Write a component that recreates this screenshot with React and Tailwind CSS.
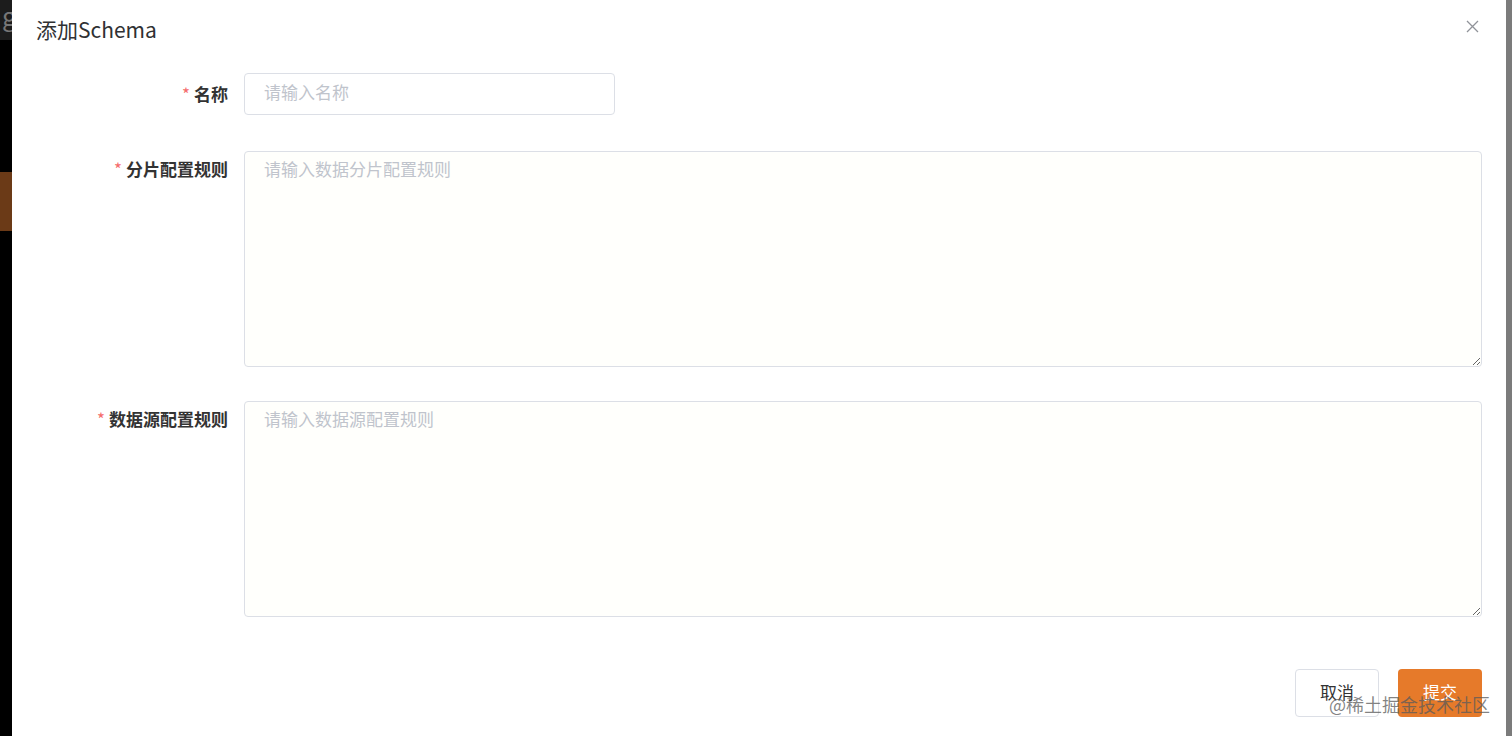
import { useState } from "react";

const font = { fontFamily: '"Noto Sans CJK SC", "Noto Sans", "Liberation Sans", sans-serif' };

function Label({ text, offset }) {
    return (
        <label
            className={`w-[232px] shrink-0 pr-[16px] text-right text-[17px] leading-[36px] font-bold text-[#333333] ${offset ? "pt-[3px]" : ""}`}
        >
            <span className="text-[#f56c6c] mr-[4px] font-normal">*</span>
            {text}
        </label>
    );
}

export default function App() {
    const [name, setName] = useState("");
    const [shard, setShard] = useState("");
    const [source, setSource] = useState("");

    return (
        <div className="flex h-[736px] w-[1512px] overflow-hidden" style={font}>
            {/* 背景页面的边缘 */}
            <div className="flex w-[12px] shrink-0 flex-col">
                <div className="h-[40px] bg-[#1c1c1c] overflow-hidden text-[26px] leading-[30px] text-[#777] pl-[2px]">g</div>
                <div className="h-[132px] bg-black" />
                <div className="h-[59px] bg-[#6b3a17]" />
                <div className="flex-1 bg-black" />
            </div>

            {/* Dialog */}
            <div className="relative flex flex-1 flex-col bg-white">
                <div className="flex items-start justify-between pl-[24px] pr-[27px] pt-[16px]">
                    <h2 className="text-[21px] leading-[26px] text-[#303133]">添加Schema</h2>
                    <button className="mt-[4px] text-[#909399]">
                        <svg width="13" height="13" viewBox="0 0 13 13" fill="none" stroke="currentColor" strokeWidth="1.3">
                            <path d="M1 1L12 12M12 1L1 12" />
                        </svg>
                    </button>
                </div>

                <div className="mt-[31px] flex flex-col pr-[24px]">
                    <div className="mb-[36px] flex">
                        <Label text="名称" offset />
                        <input
                            type="text"
                            value={name}
                            onChange={(e) => setName(e.target.value)}
                            placeholder="请输入名称"
                            className="h-[42px] w-[371px] rounded-[4px] border border-[#dcdfe6] bg-white px-[19px] pb-[5px] text-[17px] text-[#606266] outline-none placeholder:text-[#c0c4cc]"
                        />
                    </div>
                    <div className="mb-[34px] flex">
                        <Label text="分片配置规则" />
                        <textarea
                            value={shard}
                            onChange={(e) => setShard(e.target.value)}
                            placeholder="请输入数据分片配置规则"
                            className="h-[216px] flex-1 rounded-[4px] border border-[#dcdfe6] bg-[#fffffc] px-[19px] pt-[5px] text-[17px] leading-[24px] text-[#606266] outline-none placeholder:text-[#c0c4cc]"
                        />
                    </div>
                    <div className="flex">
                        <Label text="数据源配置规则" />
                        <textarea
                            value={source}
                            onChange={(e) => setSource(e.target.value)}
                            placeholder="请输入数据源配置规则"
                            className="h-[216px] flex-1 rounded-[4px] border border-[#dcdfe6] bg-[#fffffc] px-[19px] pt-[5px] text-[17px] leading-[24px] text-[#606266] outline-none placeholder:text-[#c0c4cc]"
                        />
                    </div>
                </div>

                <div className="mt-[52px] flex justify-end gap-[19px] pr-[24px]">
                    <button className="h-[48px] w-[84px] rounded-[4px] border border-[#dcdfe6] bg-white pb-[3px] text-[17px] text-[#333333]">
                        取消
                    </button>
                    <button className="h-[48px] w-[84px] rounded-[4px] bg-[#e67a2a] pb-[3px] text-[17px] text-white">
                        提交
                    </button>
                </div>

                {/* 水印 */}
                <div className="pointer-events-none absolute bottom-[20px] right-[16px] text-[18px] leading-[24px] text-[rgba(90,90,90,0.75)]">
                    @稀土掘金技术社区
                </div>
            </div>

            <div className="w-[6px] shrink-0 bg-[#7b7b7b]" />
        </div>
    );
}
